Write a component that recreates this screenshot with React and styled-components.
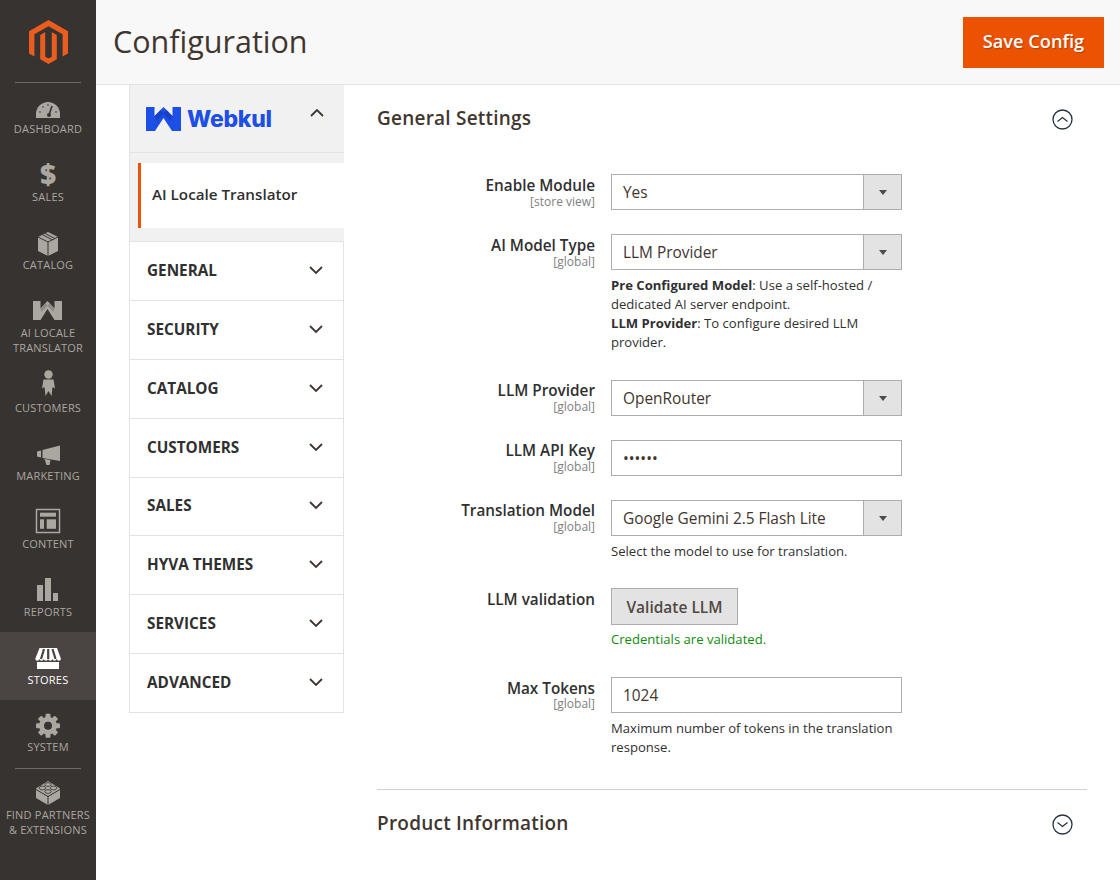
import React from "react";
import styled, { createGlobalStyle } from "styled-components";

const GlobalStyle = createGlobalStyle`
  html, body {
    margin: 0;
    padding: 0;
    background: #fff;
  }
  body {
    font-family: "Open Sans", "Liberation Sans", sans-serif;
    color: #41362f;
  }
`;

const Page = styled.div`
  display: flex;
  width: 1120px;
  height: 880px;
  overflow: hidden;
`;

const Sidebar = styled.nav`
  width: 96px;
  flex: none;
  background: #373330;
`;

const LogoBox = styled.div`
  height: 82px;
  display: flex;
  justify-content: center;
  padding-top: 20px;
  box-sizing: border-box;
`;

const Rule = styled.div`
  height: 1px;
  margin: ${props => props.$top || 0}px 15px -2px;
  background: #6f6a65;
`;

const NavItem = styled.div`
  height: ${props => props.$height || 68}px;
  background: ${props => (props.$active ? "#4a4542" : "none")};
  color: ${props => (props.$active ? "#fff" : "#aaa6a0")};
  padding-top: ${props => props.$pad || 10}px;
  box-sizing: border-box;
`;

const IconBox = styled.div`
  height: 30px;
  display: flex;
  justify-content: center;
  & svg {
    width: 32px;
    height: 32px;
    overflow: visible;
    flex: none;
  }
`;

const DollarGlyph = styled.span`
  font-size: 28px;
  font-weight: 800;
  line-height: 30px;
  color: #aaa6a0;
`;

const NavLabel = styled.div`
  font-size: 11px;
  line-height: 15px;
  text-align: center;
  letter-spacing: 0.2px;
  white-space: nowrap;
`;

const Main = styled.div`
  flex: 1;
  min-width: 0;
`;

const Header = styled.header`
  height: 85px;
  box-sizing: border-box;
  background: #f8f8f8;
  border-bottom: 1px solid #e3e3e3;
  display: flex;
  align-items: flex-start;
  justify-content: space-between;
  padding: 17px 16px 0 17px;
`;

const Title = styled.h1`
  margin: 0;
  font-size: 30.5px;
  line-height: 48px;
  font-weight: 400;
  color: #41362f;
`;

const SaveButton = styled.button`
  width: 141px;
  height: 51px;
  border: 1px solid #eb5202;
  background: #eb5202;
  color: #fff;
  font-family: inherit;
  font-size: 18.2px;
  font-weight: 600;
  padding: 0 0 4px;
  text-shadow: 1px 1px 1px rgba(0, 0, 0, 0.25);
`;

const Content = styled.div`
  display: flex;
  gap: 33px;
  padding-left: 33px;
`;

const ConfigNav = styled.aside`
  width: 215px;
  flex: none;
`;

const TabHead = styled.div`
  height: 68px;
  box-sizing: border-box;
  background: #f1f1f1;
  border: 1px solid #e3e3e3;
  border-width: 0 0 1px 1px;
  display: flex;
  align-items: flex-start;
  justify-content: space-between;
  padding: 0 20px 0 16px;
  & > svg {
    margin-top: 24px;
  }
`;

const Brand = styled.div`
  display: flex;
  align-items: center;
  height: 67px;
  gap: 6px;
  color: #1d4ee6;
  font-family: "Inter", "Liberation Sans", sans-serif;
  font-size: 23px;
  font-weight: 800;
  letter-spacing: -0.3px;
  & svg {
    width: 35px;
    height: 24px;
    flex: none;
  }
`;

const SubWrap = styled.div`
  background: #f1f1f1;
  padding: 10px 0 13px 0;
  border-bottom: 1px solid #e3e3e3;
  border-left: 1px solid #e3e3e3;
`;

const SubItem = styled.div`
  margin-left: 8px;
  height: 65px;
  box-sizing: border-box;
  background: #fff;
  border-left: 3px solid #eb5202;
  padding: 0 0 3px 11px;
  display: flex;
  align-items: center;
  font-size: 15.2px;
  font-weight: 600;
  color: #303030;
`;

const NavRow = styled.div`
  height: 58.875px;
  box-sizing: border-box;
  background: #fff;
  border: 1px solid #e3e3e3;
  border-top: none;
  display: flex;
  align-items: center;
  justify-content: space-between;
  padding: 0 20px 2px 17px;
  font-size: 15.3px;
  font-weight: 700;
  color: #303030;
`;

const ChevronIcon = styled.svg`
  width: 14px;
  height: 8px;
  fill: none;
  stroke: #41362f;
  stroke-width: 1.8;
  transform: ${props => (props.$up ? "rotate(180deg)" : "none")};
`;

const Settings = styled.section`
  width: 710px;
  flex: none;
`;

const SectionHead = styled.div`
  height: ${props => props.$height || 65}px;
  display: flex;
  align-items: center;
  justify-content: space-between;
  padding-right: 14px;
`;

const SectionTitle = styled.h2`
  margin: 0;
  font-size: 19px;
  font-weight: 600;
  letter-spacing: 0.22px;
  color: #41362f;
`;

const CircleIcon = styled.svg`
  width: 21px;
  height: 21px;
  margin-top: 3px;
  fill: none;
  stroke: #28323f;
  stroke-width: 1.3;
`;

const Form = styled.div`
  padding-top: 24px;
  padding-bottom: 32px;
  border-bottom: 1px solid #d0d0d0;
`;

const Field = styled.div`
  display: grid;
  grid-template-columns: 218px 291px;
  column-gap: 16px;
  margin-bottom: ${props => (props.$last ? 0 : props.$gap || 24)}px;
`;

const LabelCol = styled.div`
  text-align: right;
  padding-top: ${props => props.$top ?? 1}px;
`;

const FieldLabel = styled.div`
  font-size: 15.3px;
  line-height: 20px;
  font-weight: 600;
  color: #303030;
`;

const Scope = styled.div`
  margin-top: ${props => props.$gap ?? 1}px;
  font-size: 12px;
  line-height: 12px;
  color: #808080;
`;

const SelectBox = styled.div`
  height: 36px;
  box-sizing: border-box;
  border: 1px solid #adadad;
  background: #fff;
  display: flex;
  align-items: center;
  justify-content: space-between;
  padding-left: 11px;
  font-size: 15.4px;
  color: #41362f;
`;

const SelectArrow = styled.span`
  width: 38px;
  height: 34px;
  background: #e3e3e3;
  border-left: 1px solid #adadad;
  box-sizing: border-box;
  display: flex;
  align-items: center;
  justify-content: center;
  &::after {
    content: "";
    border-top: 5px solid #514943;
    border-left: 4px solid transparent;
    border-right: 4px solid transparent;
  }
`;

const TextInput = styled.input`
  display: block;
  width: 100%;
  height: 36px;
  box-sizing: border-box;
  border: 1px solid #adadad;
  padding: 0 11px;
  font-family: inherit;
  font-size: 15.4px;
  color: #41362f;
  outline: none;
`;

const Note = styled.div`
  margin-top: ${props => props.$top || 6}px;
  font-size: 13.1px;
  line-height: 19px;
  color: ${props => props.$color || "#303030"};
  & b {
    font-weight: 700;
  }
`;

const ActionButton = styled.button`
  display: block;
  width: 127px;
  height: 37px;
  border: 1px solid #adadad;
  background: #e3e3e3;
  font-family: inherit;
  font-size: 15.5px;
  font-weight: 600;
  color: #514943;
`;

function MagentoLogo() {
  return (
    <svg width="39" height="44" viewBox="0 0 39 44" fill="#eb5c1f">
      <path d="M19.5 0 39 11.2v22.2l-5.400 3.100V14.300L19.500 6.200 5.400 14.300v22.200L0 33.400V11.200z" />
      <path d="M19.500 44l-8.300-4.800V14.900l5-2.900v24.700l3.300 1.900 3.300-1.900V12l5 2.900v24.300z" />
    </svg>
  );
}

function WebkulMark() {
  return (
    <svg viewBox="0 0 35 24">
      <path fill="#1d4ee6" d="M0 0h8.500v9L17.500 0l9 9V0H35v24h-9l-8.500-13L9 24H0z" />
      <path fill="#1238b4" d="M8.500 9l9-9 3 3-9.500 11zM26.500 9l-9-9-3 3 9.500 11z" opacity="0.600" />
    </svg>
  );
}

function Chevron({ up }) {
  return (
    <ChevronIcon $up={up} viewBox="0 0 14 8">
      <path d="M1 1l6 6 6-6" />
    </ChevronIcon>
  );
}

function CircleToggle({ up }) {
  return (
    <CircleIcon viewBox="0 0 21 21">
      <circle cx="10.500" cy="10.500" r="9.500" />
      <path d={up ? "M5.500 12.500l5-4 5 4" : "M5.500 8.500l5 4 5-4"} />
    </CircleIcon>
  );
}

const DARK = "#373330";

const icons = {
  dashboard: (
    <svg viewBox="0 0 32 32" fill="#aaa6a0">
      <path d="M4 27v-4a12 12 0 0 1 24 0v4z" />
      <path d="M17 24l3-9" stroke={DARK} strokeWidth="1.600" />
      <circle cx="17" cy="24" r="2" fill={DARK} />
      <g fill={DARK}>
        <circle cx="8" cy="21" r="0.800" />
        <circle cx="11" cy="16" r="0.800" />
        <circle cx="16" cy="14" r="0.800" />
        <circle cx="24" cy="21" r="0.800" />
      </g>
    </svg>
  ),
  catalog: (
    <svg viewBox="0 0 32 32" fill="#aaa6a0">
      <path d="M16 5l10 5v14l-10 5-10-5V10z" />
      <path d="M6 10l10 5 10-5M16 15v14" fill="none" stroke={DARK} strokeWidth="1" />
      <path d="M10.500 7.700l10 5.200" fill="none" stroke={DARK} strokeWidth="1" />
      <path d="M13 6.400l10 5.200" fill="none" stroke={DARK} strokeWidth="1" />
    </svg>
  ),
  translator: (
    <svg viewBox="0 0 32 32" fill="#aaa6a0">
      <path d="M1 6h7.500v7.500L15.500 6l7 7.500V6H30v19h-7.500L15.500 14 8.500 25H1z" />
      <path d="M8.500 13.500l7-7.500 2 2.500-8 8.500zM22.500 13.500l-7-7.500-2 2.500 8 8.500z" fill="#8d8983" />
    </svg>
  ),
  customers: (
    <svg viewBox="0 0 32 32" fill="#aaa6a0">
      <circle cx="16.500" cy="4.500" r="4.200" />
      <path d="M11.500 9.500h10l1.500 9-2.500-1.500-1 9-3-5-3 5-1-9-2.500 1.500z" />
    </svg>
  ),
  marketing: (
    <svg viewBox="0 0 32 32" fill="#aaa6a0">
      <path d="M5 13.500l4-1v7l-4-1z" />
      <path d="M10.500 12L28 7.500V23l-17.500-3z" />
      <path d="M12.500 21l6 1-1 5h-3z" />
    </svg>
  ),
  content: (
    <svg viewBox="0 0 32 32" fill="#aaa6a0">
      <rect x="4.500" y="3.500" width="23" height="23" fill="none" stroke="#aaa6a0" strokeWidth="1.500" />
      <rect x="8" y="6.700" width="16" height="4" />
      <rect x="8" y="13.300" width="4" height="9.500" />
      <rect x="14.700" y="13.300" width="9.300" height="9.500" />
    </svg>
  ),
  reports: (
    <svg viewBox="0 0 32 32" fill="#aaa6a0">
      <rect x="5" y="11" width="6" height="16" />
      <rect x="13" y="4" width="6" height="23" />
      <rect x="21" y="19" width="5" height="8" />
    </svg>
  ),
  stores: (
    <svg viewBox="0 0 32 32" fill="#fff">
      <path d="M7.500 6h17.500l4 11a2.200 2.200 0 0 1-4.300 0 2.200 2.200 0 0 1-4.300 0 2.200 2.200 0 0 1-4.300 0 2.200 2.200 0 0 1-4.300 0 2.200 2.200 0 0 1-4.300 0 2.200 2.200 0 0 1-4.300 0z" />
      <rect x="5" y="20" width="22" height="7" />
      <path d="M12 7l-3 10M16.200 7v10M20.500 7l3 10" fill="none" stroke="#4a4542" strokeWidth="2.200" />
    </svg>
  ),
  system: (
    <svg viewBox="0 0 32 32" fill="#aaa6a0">
      <circle cx="16" cy="16.700" r="9" />
      {[0, 45, 90, 135, 180, 225, 270, 315].map(a => (
        <rect key={a} x="13.500" y="4.700" width="5" height="5" rx="1" transform={`rotate(${a} 16 16.700)`} />
      ))}
      <circle cx="16" cy="16.700" r="4" fill={DARK} />
    </svg>
  ),
  partners: (
    <svg viewBox="0 0 32 32" fill="#aaa6a0">
      <path d="M16 4l12 7.500V21l-12 7-12-7v-9.500z" />
      <path d="M4 12.500l12 7 12-7M16 19.500V28" fill="none" stroke={DARK} strokeWidth="1" />
      {[[16, 7.500], [10.500, 11], [21.500, 11], [16, 14.500]].map(([x, y]) => (
        <ellipse key={x + "-" + y} cx={x} cy={y} rx="3.200" ry="1.900" fill="#aaa6a0" stroke={DARK} strokeWidth="0.800" />
      ))}
    </svg>
  ),
};

const menu = [
  { key: "dashboard", label: ["DASHBOARD"] },
  { key: "sales", label: ["SALES"] },
  { key: "catalog", label: ["CATALOG"] },
  { key: "translator", label: ["AI LOCALE", "TRANSLATOR"], height: 75 },
  { key: "customers", label: ["CUSTOMERS"] },
  { key: "marketing", label: ["MARKETING"] },
  { key: "content", label: ["CONTENT"] },
  { key: "reports", label: ["REPORTS"] },
  { key: "stores", label: ["STORES"], active: true },
  { key: "system", label: ["SYSTEM"], height: 67, pad: 9, rule: true },
  { key: "partners", label: ["FIND PARTNERS", "& EXTENSIONS"] },
];

const sections = ["GENERAL", "SECURITY", "CATALOG", "CUSTOMERS", "SALES", "HYVA THEMES", "SERVICES", "ADVANCED"];

function Select({ value }) {
  return (
    <SelectBox>
      {value}
      <SelectArrow />
    </SelectBox>
  );
}

function Label({ title, scope, top, gap }) {
  return (
    <LabelCol $top={top}>
      <FieldLabel>{title}</FieldLabel>
      {scope && <Scope $gap={gap}>{scope}</Scope>}
    </LabelCol>
  );
}

export default function App() {
  return (
    <Page>
      <GlobalStyle />
      <Sidebar>
        <LogoBox>
          <MagentoLogo />
        </LogoBox>
        <Rule />
        {menu.map(item => (
          <React.Fragment key={item.key}>
            <NavItem $active={item.active} $height={item.height} $pad={item.pad}>
              <IconBox>
                {item.key === "sales" ? <DollarGlyph>$</DollarGlyph> : icons[item.key]}
              </IconBox>
              {item.label.map(line => (
                <NavLabel key={line}>{line}</NavLabel>
              ))}
            </NavItem>
            {item.rule && <Rule $top={1} />}
          </React.Fragment>
        ))}
      </Sidebar>
      <Main>
        <Header>
          <Title>Configuration</Title>
          <SaveButton>Save Config</SaveButton>
        </Header>
        <Content>
          <ConfigNav>
            <TabHead>
              <Brand>
                <WebkulMark />
                Webkul
              </Brand>
              <Chevron up />
            </TabHead>
            <SubWrap>
              <SubItem>AI Locale Translator</SubItem>
            </SubWrap>
            {sections.map(name => (
              <NavRow key={name}>
                {name}
                <Chevron />
              </NavRow>
            ))}
          </ConfigNav>
          <Settings>
            <SectionHead>
              <SectionTitle>General Settings</SectionTitle>
              <CircleToggle up />
            </SectionHead>
            <Form>
              <Field>
                <Label title="Enable Module" scope="[store view]" />
                <Select value="Yes" />
              </Field>
              <Field $gap={28}>
                <Label title="AI Model Type" scope="[global]" />
                <div>
                  <Select value="LLM Provider" />
                  <Note>
                    <b>Pre Configured Model</b>: Use a self-hosted / dedicated AI server endpoint.
                    <br />
                    <b>LLM Provider</b>: To configure desired LLM provider.
                  </Note>
                </div>
              </Field>
              <Field>
                <Label title="LLM Provider" scope="[global]" top={0} />
                <Select value="OpenRouter" />
              </Field>
              <Field>
                <Label title="LLM API Key" scope="[global]" top={0} />
                <TextInput type="password" value="secret" readOnly />
              </Field>
              <Field $gap={27}>
                <Label title="Translation Model" scope="[global]" top={0} />
                <div>
                  <Select value="Google Gemini 2.5 Flash Lite" />
                  <Note>Select the model to use for translation.</Note>
                </div>
              </Field>
              <Field $gap={28}>
                <Label title="LLM validation" />
                <div>
                  <ActionButton>Validate LLM</ActionButton>
                  <Note $top={5} $color="#108a10">Credentials are validated.</Note>
                </div>
              </Field>
              <Field $last>
                <Label title="Max Tokens" scope="[global]" gap={0} />
                <div>
                  <TextInput value="1024" readOnly />
                  <Note>Maximum number of tokens in the translation response.</Note>
                </div>
              </Field>
            </Form>
            <SectionHead $height={66}>
              <SectionTitle>Product Information</SectionTitle>
              <CircleToggle />
            </SectionHead>
          </Settings>
        </Content>
      </Main>
    </Page>
  );
}
